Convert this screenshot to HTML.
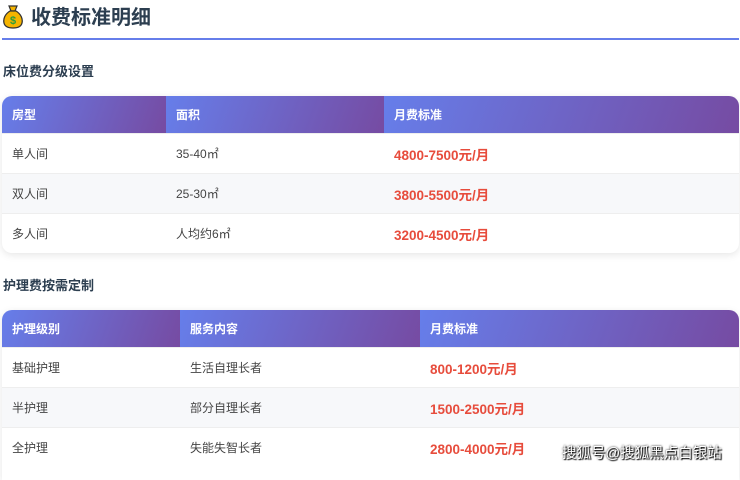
<!DOCTYPE html>
<html><head><meta charset="utf-8"><style>
body{margin:0;width:740px;height:468px;overflow:hidden;background:#fff;font-family:"Liberation Sans","Noto Sans CJK SC",sans-serif;position:relative}
.t{position:absolute;left:31px;top:3px;font-size:20px;font-weight:bold;color:#2c3e50;line-height:30px}
.line{position:absolute;left:2px;top:38px;width:737px;height:2px;background:#667eea}
.h{position:absolute;left:3px;font-size:13px;font-weight:bold;color:#2c3e50}
.tb{position:absolute;left:2px;width:737px;border-radius:10px;overflow:hidden;box-shadow:0 2px 8px rgba(0,0,0,.1);background:#fff}
.r{display:flex;height:40px;align-items:center;font-size:12px;color:#444;border-top:1px solid #eee;box-sizing:border-box}
.r.alt{background:#f7f8fa}
.hd{display:flex;height:37px;font-size:12px;font-weight:bold;color:#fff}
.hd div{background:linear-gradient(110deg,#667eea,#764ba2);display:flex;align-items:center;padding-left:10px;box-sizing:border-box}
.r div{padding-left:10px;box-sizing:border-box}
.p{color:#e74c3c;font-weight:bold;font-size:13.5px}
.wm{position:absolute;left:562px;top:442px;font-size:14.5px;color:#fff;text-shadow:0 0 2px #000,1px 1px 1px #000;letter-spacing:0}
</style></head><body>
<svg style="position:absolute;left:3px;top:5px" width="20" height="24" viewBox="0 0 20 24"><path d="M6 1h8l-2 5h-4z" fill="#f5b400" stroke="#333" stroke-width="1.2"/><path d="M7 6h6c5 3 7 8 6 12-1 4-5 5-9 5s-8-1-9-5c-1-4 1-9 6-12z" fill="#f5b400" stroke="#333" stroke-width="1.3"/><text x="10" y="19" font-size="11" font-weight="bold" fill="#2a9d3c" text-anchor="middle" font-family="Liberation Sans">$</text></svg>
<div class="t">收费标准明细</div>
<div class="line"></div>
<div class="h" style="top:61px">床位费分级设置</div>
<div class="tb" style="top:96px">
<div class="hd"><div style="width:164px">房型</div><div style="width:218px">面积</div><div style="width:355px">月费标准</div></div>
<div class="r"><div style="width:164px">单人间</div><div style="width:218px">35-40㎡</div><div class="p">4800-7500元/月</div></div>
<div class="r alt"><div style="width:164px">双人间</div><div style="width:218px">25-30㎡</div><div class="p">3800-5500元/月</div></div>
<div class="r"><div style="width:164px">多人间</div><div style="width:218px">人均约6㎡</div><div class="p">3200-4500元/月</div></div>
</div>
<div class="h" style="top:275px">护理费按需定制</div>
<div class="tb" style="top:310px;border-bottom-left-radius:0;border-bottom-right-radius:0;height:170px">
<div class="hd"><div style="width:178px">护理级别</div><div style="width:240px">服务内容</div><div style="width:319px">月费标准</div></div>
<div class="r"><div style="width:178px">基础护理</div><div style="width:240px">生活自理长者</div><div class="p">800-1200元/月</div></div>
<div class="r alt"><div style="width:178px">半护理</div><div style="width:240px">部分自理长者</div><div class="p">1500-2500元/月</div></div>
<div class="r"><div style="width:178px">全护理</div><div style="width:240px">失能失智长者</div><div class="p">2800-4000元/月</div></div>
</div>
<div class="wm">搜狐号@搜狐黑点白银站</div>
</body></html>
